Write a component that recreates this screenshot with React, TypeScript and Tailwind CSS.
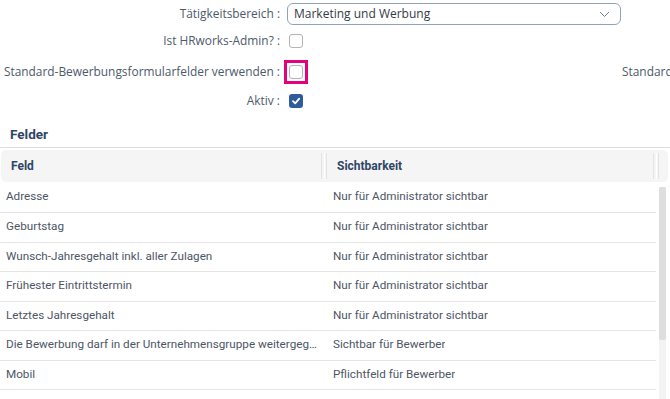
import React from "react";

const rows: [string, string][] = [
  ["Adresse", "Nur für Administrator sichtbar"],
  ["Geburtstag", "Nur für Administrator sichtbar"],
  ["Wunsch-Jahresgehalt inkl. aller Zulagen", "Nur für Administrator sichtbar"],
  ["Frühester Eintrittstermin", "Nur für Administrator sichtbar"],
  ["Letztes Jahresgehalt", "Nur für Administrator sichtbar"],
  ["Die Bewerbung darf in der Unternehmensgruppe weitergegeben werden", "Sichtbar für Bewerber"],
  ["Mobil", "Pflichtfeld für Bewerber"],
];

function Box({ checked }: { checked?: boolean }) {
  if (checked) {
    return (
      <span className="flex h-[14px] w-[14px] shrink-0 items-center justify-center rounded-[3px] bg-[#2d5b9c]">
        <svg width="10" height="10" viewBox="0 0 10 10" fill="none">
          <path d="M2 5.2 L4.2 7.4 L8.2 2.6" stroke="white" strokeWidth="1.8" strokeLinecap="round" strokeLinejoin="round" />
        </svg>
      </span>
    );
  }
  return <span className="block h-[14px] w-[14px] shrink-0 rounded-[3px] border border-[#b4b4b4] bg-white" />;
}

function Label({ children }: { children: React.ReactNode }) {
  return (
    <div className="w-[282px] shrink-0 whitespace-nowrap pr-[2px] text-right text-[11.9px] text-[#4d5a6b]">
      {children}
    </div>
  );
}

export default function App() {
  return (
    <div
      className="relative h-[399px] w-[670px] overflow-hidden bg-white"
      style={{ fontFamily: "'Open Sans', sans-serif" }}
    >
      <div className="pt-[3px]">
        <div className="flex h-[22px] items-center">
          <Label>Tätigkeitsbereich :</Label>
          <div className="ml-[5px] flex h-[22px] w-[334px] shrink-0 items-center justify-between rounded-[6px] border border-[#8ea2c0] pl-[6px] pr-[10px] text-[12px] text-[#333a45]">
            <span>Marketing und Werbung</span>
            <svg width="11" height="7" viewBox="0 0 11 7" fill="none">
              <path d="M1 1 L5.5 5.5 L10 1" stroke="#6b7a90" strokeWidth="1" />
            </svg>
          </div>
        </div>
        <div className="flex h-[32px] items-center">
          <Label>Ist HRworks-Admin? :</Label>
          <div className="ml-[7px] shrink-0">
            <Box />
          </div>
        </div>
        <div className="flex h-[30px] items-center overflow-hidden">
          <Label>Standard-Bewerbungsformularfelder verwenden :</Label>
          <div className="ml-[2px] flex h-[24px] w-[24px] shrink-0 items-center justify-center border-[3px] border-[#e5007d]">
            <Box />
          </div>
          <div className="ml-[314px] shrink-0 whitespace-nowrap text-[11.9px] text-[#4d5a6b]">Standard-Bewerbungsformular</div>
        </div>
        <div className="flex h-[28px] items-center">
          <Label>Aktiv :</Label>
          <div className="ml-[7px] shrink-0">
            <Box checked />
          </div>
        </div>
      </div>

      <div style={{ fontFamily: "Roboto, sans-serif" }}>
        <div className="mt-[9px] border-b border-[#dedede] pb-[3px] pl-[10px]">
          <div className="h-[20px] text-[13.5px] font-bold leading-[20px] text-[#2f4665]">Felder</div>
        </div>
        <div className="ml-[1px] mr-[2px] mt-[2px] flex h-[32px] items-center rounded-[5px] bg-[#f5f5f5] text-[12px] font-bold text-[#2f4665]">
          <div className="w-[320px] pl-[10px]">Feld</div>
          <div className="flex h-[26px] w-[6px] gap-[2px]">
            <span className="w-px bg-[#e3e3e3]" />
            <span className="w-px bg-white" />
            <span className="w-px bg-[#e3e3e3]" />
          </div>
          <div className="w-[326px] pl-[10px]">Sichtbarkeit</div>
          <div className="flex h-[26px] w-[6px] gap-[2px]">
            <span className="w-px bg-[#e3e3e3]" />
            <span className="w-px bg-white" />
            <span className="w-px bg-[#e3e3e3]" />
          </div>
        </div>
        <div className="flex">
          <div className="w-[656px]">
            {rows.map(([a, b], i) => (
              <div
                key={i}
                className={`flex items-center border-b border-[#e4e4e4] text-[11.7px] text-[#4d5665] ${i === 0 ? "h-[31px]" : "h-[29.5px]"}`}
              >
                <div className="w-[326px] truncate pl-[6px] pr-[6px]">{a}</div>
                <div className="truncate pl-[7px]">{b}</div>
              </div>
            ))}
          </div>
          <div className="ml-[3px] mt-[5px] flex h-[220px] w-[7px] flex-col bg-[#f3f3f3]">
            <div className="h-[153px] rounded-[2px] bg-[#dedede]" />
          </div>
        </div>
      </div>
    </div>
  );
}
